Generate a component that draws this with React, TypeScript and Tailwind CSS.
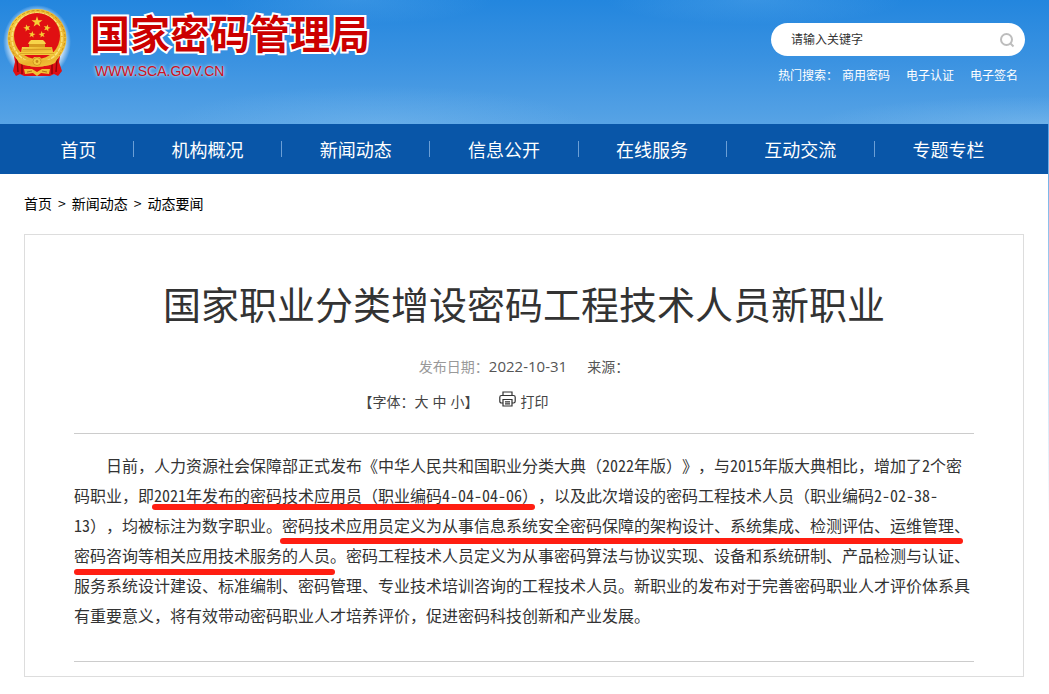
const navItems = ['首页', '机构概况', '新闻动态', '信息公开', '在线服务', '互动交流', '专题专栏'];
const hotWords = ['商用密码', '电子认证', '电子签名'];

function Emblem() {
  const star = 'M0 -5 L1.2 -1.6 L4.8 -1.5 L1.9 0.6 L2.9 4 L0 2 L-2.9 4 L-1.9 0.6 L-4.8 -1.5 L-1.2 -1.6 Z';
  return (
    <svg className="h-[76px] w-[70px] shrink-0" viewBox="0 0 70 76" aria-label="国徽" role="img">
      <defs>
        <linearGradient id="gold" x1="0" y1="0" x2="1" y2="1">
          <stop offset="0" stopColor="#f6d64a" />
          <stop offset="0.5" stopColor="#e9b02c" />
          <stop offset="1" stopColor="#f3c93c" />
        </linearGradient>
        <radialGradient id="halo">
          <stop offset="0.8" stopColor="#fff" stopOpacity="0.7" />
          <stop offset="1" stopColor="#fff" stopOpacity="0" />
        </radialGradient>
      </defs>
      <ellipse cx="35" cy="37" rx="34" ry="37" fill="url(#halo)" />
      {/* ribbons */}
      <path d="M11 46 L59 46 L57 57 L60 66 L56 71 L52 69 L48 71 H22 L18 69 L14 71 L11 66 L13 57 Z" fill="#e01013" />
      <path d="M15 54 L16 67 M20 58 L20 69 M50 58 L50 69 M55 54 L54 67" stroke="#8f0508" strokeWidth="1.4" />
      {/* wheat ring */}
      <ellipse cx="35" cy="33" rx="29.5" ry="29" fill="url(#gold)" />
      <ellipse cx="35" cy="33" rx="28" ry="27.5" fill="none" stroke="#c98e1c" strokeWidth="1" strokeDasharray="3 2" />
      <ellipse cx="35" cy="33" rx="25" ry="25" fill="none" stroke="#fae27a" strokeWidth="1.5" strokeDasharray="4 1" />
      <ellipse cx="35" cy="31" rx="23" ry="23" fill="#e01012" />
      <g fill="#f7cf35">
        <path d={star} transform="translate(35 17) scale(1.15)" />
        <path d={star} transform="translate(25 23) scale(.75) rotate(-15)" />
        <path d={star} transform="translate(45 23) scale(.75) rotate(15)" />
        <path d={star} transform="translate(30 29.5) scale(.7) rotate(10)" />
        <path d={star} transform="translate(40 29.5) scale(.7) rotate(-10)" />
      </g>
      {/* gate tower */}
      <path d="M27 37 L29 35 H41 L43 37 L44 39 H26 Z" fill="#f7d44a" />
      <path d="M27 39 H43 V42 H27 Z" fill="#d79b20" />
      <path d="M20 42 H50 L51 47 H19 Z" fill="url(#gold)" />
      <path d="M16 47 H54 L51 50 H19 Z" fill="#f5cb3d" />
      <path d="M21 44.5 H49 M18 48.5 H52" stroke="#c98e1c" strokeWidth=".6" />
      {/* gear and knot */}
      <path d="M13 51 Q22 56 30 55 L32 52 H38 L40 55 Q48 56 57 51 L53 58 Q45 62 35 61 Q25 62 17 58 Z" fill="url(#gold)" />
      <circle cx="35" cy="56.5" r="4" fill="#f4ca3d" stroke="#c98e1c" strokeWidth=".8" />
      <circle cx="35" cy="56.5" r="1.4" fill="#c68519" />
      <path d="M22 64 L30 64 L35 67 L40 64 L48 64 L47 69 L39 68 L35 71 L31 68 L23 69 Z" fill="#f2c235" />
      <path d="M25 67 L30 66 M40 66 L45 67" stroke="#a65c0c" strokeWidth=".8" />
    </svg>
  );
}

function Header() {
  return (
    <header className="flex h-[124px] justify-between bg-[radial-gradient(ellipse_at_36%_100%,rgba(150,205,245,0.25),transparent_22%),radial-gradient(ellipse_at_34%_0%,rgba(130,195,245,0.2),transparent_14%),radial-gradient(ellipse_at_72%_0%,rgba(130,195,245,0.22),transparent_14%),radial-gradient(ellipse_at_100%_100%,rgba(160,210,245,0.3),transparent_16%)] pr-6 pl-0.5">
      <a href="#" className="flex items-start pt-[5px]">
        <Emblem />
        <div className="pt-1 pl-[18px]">
          <h1 className="text-[40px] leading-[46px] font-bold text-[#cc0000] [-webkit-text-stroke:4px_white] [paint-order:stroke_fill]">
            国家密码管理局
          </h1>
          <p className="pt-0.5 pl-[5px] font-['Liberation_Sans',sans-serif] text-sm leading-[28px] text-[#d01020] [text-shadow:0_0_3px_rgba(255,255,255,0.8),0_0_5px_rgba(255,255,255,0.5)]">
            WWW.SCA.GOV.CN
          </p>
        </div>
      </a>
      <div className="pt-[23px] text-xs">
        <form className="flex h-[33px] w-[254px] items-center rounded-full bg-white pr-2.5 pl-5" onSubmit={(e) => e.preventDefault()}>
          <input
            type="text"
            aria-label="请输入关键字"
            placeholder="请输入关键字"
            className="min-w-0 flex-1 pb-0.5 text-[#333] outline-none placeholder:text-[#333]"
          />
          <button type="submit" aria-label="搜索">
            <svg className="size-4" viewBox="0 0 16 16" fill="none" stroke="#bdbdbd" strokeWidth="2">
              <circle cx="7.5" cy="7.5" r="5.5" />
              <path d="M11.5 11.5 L14.5 14.5" />
            </svg>
          </button>
        </form>
        <div className="flex pt-[9px] pl-[7px] leading-5 text-white">
          <span className="mr-1">热门搜索：</span>
          <div className="flex gap-4">
            {hotWords.map((word) => (
              <a key={word} href="#">{word}</a>
            ))}
          </div>
        </div>
      </div>
    </header>
  );
}

function PrinterIcon() {
  return (
    <svg className="mb-1 h-4 w-[17px]" viewBox="0 0 17 16" fill="none" stroke="#333" strokeWidth="1.2">
      <path d="M4 4.5 V1 H13 V4.5" />
      <path d="M4 12 H2.5 Q.8 12 .8 10.3 V6.2 Q.8 4.5 2.5 4.5 H14.5 Q16.2 4.5 16.2 6.2 V10.3 Q16.2 12 14.5 12 H13" />
      <path d="M4 8.5 H13 V15 H4 Z M6 10.8 H11 M6 12.8 H11" />
    </svg>
  );
}

function Article() {
  return (
    <article className="border border-[#ddd] px-[49px] pt-10 pb-3.5">
      <h2 className="text-center text-[38px] leading-[56px] text-[#333]">国家职业分类增设密码工程技术人员新职业</h2>
      <div className="mt-[23px] flex justify-center gap-5 text-sm leading-6 text-[#555]">
        <p className="flex">
          <span className="text-[#999]">发布日期：</span>
          <time className="font-['Open_Sans',sans-serif] text-[15px]">2022-10-31</time>
        </p>
        <p>来源：</p>
      </div>
      <div className="mt-[11px] flex justify-center gap-5 pr-[141px] text-sm leading-6 text-[#444]">
        <p className="flex">
          <span>【字体：</span>
          <span className="flex gap-1">
            <button type="button">大</button>
            <button type="button">中</button>
            <button type="button">小</button>
          </span>
          <span>】</span>
        </p>
        <button type="button" className="flex items-center gap-[5px]">
          <PrinterIcon />
          打印
        </button>
      </div>
      <div className="relative mt-5 border-y border-[#ccc] pt-4 pb-[31px]">
        <p className="indent-8 font-['Noto_Sans_Mono_CJK_SC','Liberation_Serif','Noto_Sans_CJK_SC',sans-serif] text-base leading-[30px] text-[#333]">
          日前，人力资源社会保障部正式发布《中华人民共和国职业分类大典（2022年版）》，与2015年版大典相比，增加了2个密码职业，即2021年发布的密码技术应用员（职业编码4-04-04-06），以及此次增设的密码工程技术人员（职业编码2-02-38-13），均被标注为数字职业。密码技术应用员定义为从事信息系统安全密码保障的架构设计、系统集成、检测评估、运维管理、密码咨询等相关应用技术服务的人员。密码工程技术人员定义为从事密码算法与协议实现、设备和系统研制、产品检测与认证、服务系统设计建设、标准编制、密码管理、专业技术培训咨询的工程技术人员。新职业的发布对于完善密码职业人才评价体系具有重要意义，将有效带动密码职业人才培养评价，促进密码科技创新和产业发展。
        </p>
        {/* hand-drawn marker strokes */}
        <span className="absolute top-[70px] left-[78px] h-1.5 w-[383px] rounded-full bg-[#ff1e12]" />
        <span className="absolute top-[104px] left-[206px] h-1.5 w-[683px] rounded-full bg-[#ff1e12]" />
        <span className="absolute top-[135px] left-0 h-1.5 w-[261px] rounded-full bg-[#ff1e12]" />
      </div>
    </article>
  );
}

export default function App() {
  return (
    <div className="min-h-screen bg-[linear-gradient(#2386de,#3a92e1_60px,#57a3e5_124px,#8cc0ec_220px,#fff_520px)] font-['Noto_Sans_CJK_SC',sans-serif] [text-spacing-trim:space-all]">
      <Header />
      <div className="mr-px min-h-[570px] bg-white">
        <nav className="flex h-[50px] items-center bg-[#0956a8] pr-[26px] pb-px pl-6 text-lg text-white">
          {navItems.map((item, i) => (
            <a
              key={item}
              href="#"
              className={`text-center leading-4 ${i === 0 ? 'w-[110px]' : 'flex-1'} ${i < navItems.length - 1 ? 'border-r border-[#6b9fd6]' : ''}`}
            >
              {item}
            </a>
          ))}
        </nav>
        <div className="px-6">
          <div className="flex gap-1.5 pt-[17px] pb-[19px] text-sm leading-6 text-black">
            <a href="#">首页</a>
            <span>&gt;</span>
            <a href="#">新闻动态</a>
            <span>&gt;</span>
            <a href="#">动态要闻</a>
          </div>
          <Article />
        </div>
      </div>
    </div>
  );
}
